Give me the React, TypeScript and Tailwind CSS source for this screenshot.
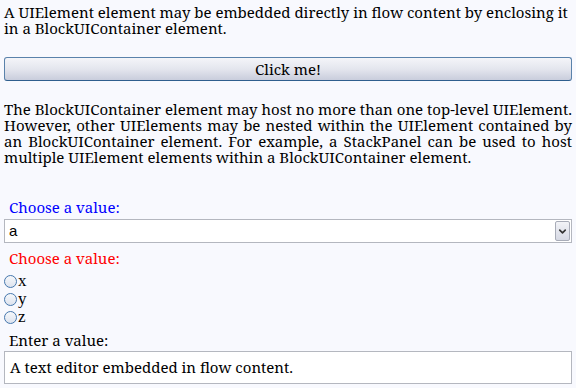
import { ChevronDown } from 'lucide-react'

function TextLines({ lines, justify }: { lines: string[]; justify?: boolean }) {
  return (
    <div className="text-[15px] leading-[16px] text-black">
      {lines.map((line, i) => (
        <div
          key={i}
          className={
            justify && i < lines.length - 1
              ? 'whitespace-nowrap text-justify [text-align-last:justify]'
              : 'whitespace-nowrap'
          }
        >
          {line}
        </div>
      ))}
    </div>
  )
}

function Radio({ label }: { label: string }) {
  return (
    <label className="flex h-[18px] items-center">
      <span className="h-[13px] w-[13px] rounded-full border border-[#4577ad] bg-gradient-to-b from-[#f6f8fb] to-[#dde3ee]" />
      <span className="ml-[1px] font-['Liberation_Serif',serif] text-[17px] leading-[18px]">{label}</span>
    </label>
  )
}

export default function App() {
  return (
    <div className="min-h-[388px] w-[576px] bg-[#f8f9fe] px-[4px] pt-[4px] font-['Noto_Serif','DejaVu_Serif',serif]">
      <TextLines
        lines={[
          'A UIElement element may be embedded directly in flow content by enclosing it',
          'in a BlockUIContainer element.',
        ]}
      />

      <button className="mt-[21px] flex h-[24px] w-full items-center justify-center rounded-[3px] border border-[#5a82ab] border-b-[#2f5f8e] bg-gradient-to-b from-[#f4f5f9] via-[#e4e6ee] to-[#c9cddc] text-[15px] leading-[16px] text-black">
        Click me!
      </button>

      <div className="mt-[20px]">
        <TextLines
          justify
          lines={[
            'The BlockUIContainer element may host no more than one top-level UIElement.',
            'However, other UIElements may be nested within the UIElement contained by',
            'an BlockUIContainer element. For example, a StackPanel can be used to host',
            'multiple UIElement elements within a BlockUIContainer element.',
          ]}
        />
      </div>

      <div className="mt-[34px] pl-[5px] text-[15px] leading-[16px] text-[#0000ff]">Choose a value:</div>
      <div className="mt-[4px] flex h-[24px] items-center border border-[#b4b7bf] bg-white pl-[4px] pr-[1px]">
        <span className="flex-1 font-['Liberation_Sans',sans-serif] text-[15px] text-black">a</span>
        <span className="flex h-[20px] w-[15px] items-center justify-center rounded-[2px] border border-[#a8acb8] bg-gradient-to-b from-[#f2f3f7] to-[#d6d9e4]">
          <ChevronDown className="h-[11px] w-[11px] text-[#333]" strokeWidth={3.5} />
        </span>
      </div>

      <div className="mt-[7px] pl-[5px] text-[15px] leading-[16px] text-[#ff0000]">Choose a value:</div>
      <div className="mt-[6px] flex flex-col">
        <Radio label="x" />
        <Radio label="y" />
        <Radio label="z" />
      </div>

      <div className="mt-[6px] pl-[5px] text-[15px] leading-[16px] text-black">Enter a value:</div>
      <div className="mt-[3px] flex h-[33px] items-center border border-[#b4b7bf] bg-white pl-[5px] text-[15px] text-black">
        A text editor embedded in flow content.
      </div>
    </div>
  )
}
